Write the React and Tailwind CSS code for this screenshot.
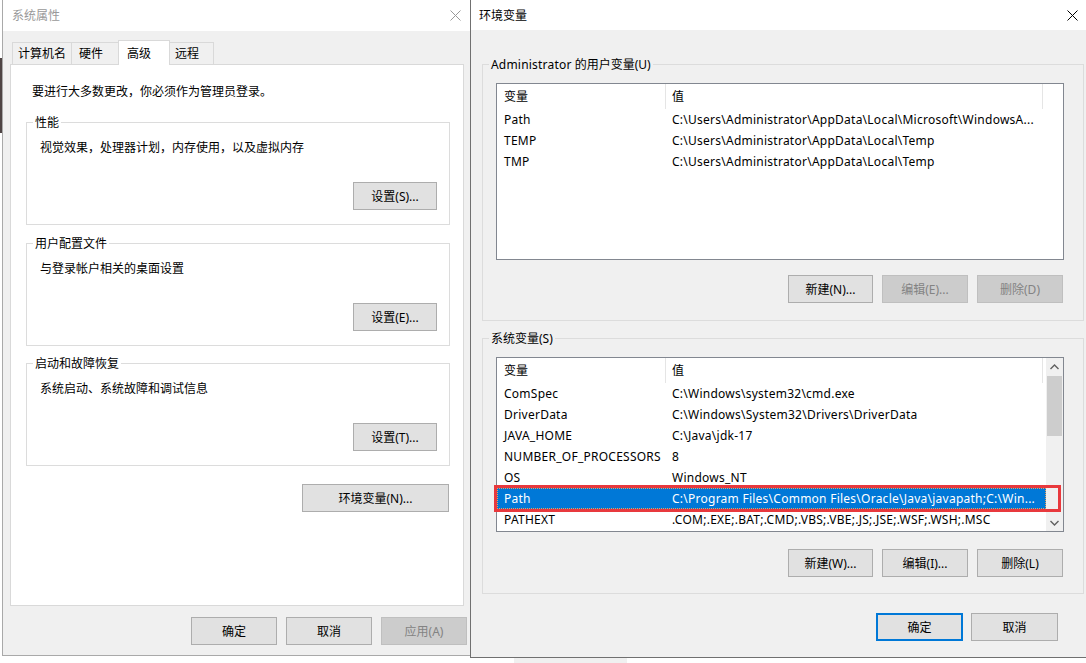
import React from 'react';
import clsx from 'clsx';

const userVars = [
  ['Path', 'C:\\Users\\Administrator\\AppData\\Local\\Microsoft\\WindowsA...'],
  ['TEMP', 'C:\\Users\\Administrator\\AppData\\Local\\Temp'],
  ['TMP', 'C:\\Users\\Administrator\\AppData\\Local\\Temp'],
];

const sysVars = [
  ['ComSpec', 'C:\\Windows\\system32\\cmd.exe'],
  ['DriverData', 'C:\\Windows\\System32\\Drivers\\DriverData'],
  ['JAVA_HOME', 'C:\\Java\\jdk-17'],
  ['NUMBER_OF_PROCESSORS', '8'],
  ['OS', 'Windows_NT'],
  ['Path', 'C:\\Program Files\\Common Files\\Oracle\\Java\\javapath;C:\\Win...'],
  ['PATHEXT', '.COM;.EXE;.BAT;.CMD;.VBS;.VBE;.JS;.JSE;.WSF;.WSH;.MSC'],
];

const CloseX = ({ color }) => (
  <svg width="11" height="11" viewBox="0 0 11 11">
    <path d="M0.5 0.5L10.5 10.5M10.5 0.5L0.5 10.5" stroke={color} strokeWidth="1" />
  </svg>
);

const Btn = ({ children, w = 'w-[86px]', disabled, primary }) => (
  <div
    className={clsx(
      'h-[28px] flex items-center justify-center shrink-0',
      w,
      disabled && 'bg-[#cccccc] border border-[#bfbfbf] text-[#838383]',
      !disabled && 'bg-[#e1e1e1] text-black',
      !disabled && !primary && 'border border-[#adadad]',
      primary && 'border-2 border-[#0078d7]'
    )}
  >
    {children}
  </div>
);

const Group = ({ label, labelBg, className, children }) => (
  <div className={clsx('relative border border-[#dcdcdc] flex flex-col shrink-0', className)}>
    <span className={clsx('absolute -top-[9px] left-[6px] px-[2px] leading-[17px]', labelBg)}>{label}</span>
    {children}
  </div>
);

const Tab = ({ children, w, pl, active }) => (
  <div
    className={clsx(
      'border border-b-0 border-[#d9d9d9] -ml-px flex items-center',
      w,
      pl,
      active ? 'h-[25px] bg-white relative z-10 -mb-px' : 'h-[22px] bg-[#f0f0f0]'
    )}
  >
    {children}
  </div>
);

const Row = ({ name, value, selected }) => (
  <div
    className={clsx(
      'flex h-[21px] items-center whitespace-nowrap tracking-[0.25px]',
      selected ? 'bg-[#0078d7] text-white outline-1 outline-dotted outline-[#e8a060] -outline-offset-1' : 'text-black'
    )}
  >
    <div className="w-[169px] pl-[7px] shrink-0">{name}</div>
    <div className="pl-[6px] overflow-hidden">{value}</div>
  </div>
);

const Header = () => (
  <div className="flex h-[25px] items-center shrink-0">
    <div className="w-[169px] h-full pl-[7px] flex items-center border-r border-[#e5e5e5] shrink-0">变量</div>
    <div className="w-[377px] h-full pl-[6px] flex items-center border-r border-[#e5e5e5] shrink-0">值</div>
  </div>
);

const Chevron = ({ up }) => (
  <svg width="9" height="6" viewBox="0 0 9 6">
    <path d={up ? 'M0.5 5L4.5 1L8.5 5' : 'M0.5 1L4.5 5L8.5 1'} stroke="#606060" strokeWidth="1.4" fill="none" />
  </svg>
);

function SystemProps() {
  return (
    <div className="absolute left-[2px] top-0 w-[469px] h-[656px] border-l border-b border-[#a9a9a9] bg-[#f0f0f0] flex flex-col">
      <div className="h-[31px] bg-white flex items-center pl-[9px] pr-[8px] shrink-0">
        <span className="text-[#999999]">系统属性</span>
        <span className="ml-auto mr-[2px] flex"><CloseX color="#999999" /></span>
      </div>
      <div className="flex items-end pl-[10px] mt-[9px]">
        <Tab w="w-[60px]" pl="pl-[5px]">计算机名</Tab>
        <Tab w="w-[48px]" pl="pl-[7px]">硬件</Tab>
        <Tab w="w-[52px]" pl="pl-[8px]" active>高级</Tab>
        <Tab w="w-[45px]" pl="pl-[5px]">远程</Tab>
      </div>
      <div className="ml-[7px] w-[454px] h-[542px] bg-white border border-[#d9d9d9] flex flex-col shrink-0">
        <div className="pt-[18px] pl-[21px]">要进行大多数更改，你必须作为管理员登录。</div>
        <Group label="性能" labelBg="bg-white" className="ml-[15px] mt-[22px] w-[424px] h-[103px] pt-[16px] px-[12px] pb-[14px]">
          <div className="pl-[1px]">视觉效果，处理器计划，内存使用，以及虚拟内存</div>
          <div className="mt-auto self-end"><Btn w="w-[84px]">设置(S)...</Btn></div>
        </Group>
        <Group label="用户配置文件" labelBg="bg-white" className="ml-[15px] mt-[18px] w-[424px] h-[103px] pt-[16px] px-[12px] pb-[14px]">
          <div className="pl-[1px]">与登录帐户相关的桌面设置</div>
          <div className="mt-auto self-end"><Btn w="w-[84px]">设置(E)...</Btn></div>
        </Group>
        <Group label="启动和故障恢复" labelBg="bg-white" className="ml-[15px] mt-[17px] w-[424px] h-[103px] pt-[16px] px-[12px] pb-[14px]">
          <div className="pl-[1px]">系统启动、系统故障和调试信息</div>
          <div className="mt-auto self-end"><Btn w="w-[84px]">设置(T)...</Btn></div>
        </Group>
        <div className="mt-[18px] self-end mr-[14px]"><Btn w="w-[147px]">环境变量(N)...</Btn></div>
      </div>
      <div className="flex mt-[11px] pl-[188px] gap-[9px]">
        <Btn>确定</Btn>
        <Btn>取消</Btn>
        <Btn disabled>应用(A)</Btn>
      </div>
    </div>
  );
}

function EnvVars() {
  return (
    <div className="absolute left-[470px] top-0 w-[626px] h-[658px] border-l border-b border-[#707070] bg-[#f0f0f0] flex flex-col">
      <div className="h-[30px] bg-white flex items-center pl-[8px] shrink-0">
        <span>环境变量</span>
        <span className="ml-auto mr-[18px] flex"><CloseX color="#000000" /></span>
      </div>
      <div className="flex flex-col px-[11px]">
        <Group label={<span>
          <span className="tracking-[0.2px]">Administrator</span> 的用户变量(U)</span>} labelBg="bg-[#f0f0f0]" className="mt-[34px] w-[602px] h-[257px]">
          <div className="ml-[13px] mt-[18px] w-[568px] h-[177px] border border-[#828790] bg-white flex flex-col shrink-0">
            <Header />
            {userVars.map(([n, v]) => (
              <Row key={n} name={n} value={v} />
            ))}
          </div>
          <div className="flex justify-end gap-[9px] mt-[15px] pr-[20px]">
            <Btn w="w-[85px]">新建(N)...</Btn>
            <Btn disabled>编辑(E)...</Btn>
            <Btn disabled>删除(D)</Btn>
          </div>
        </Group>
        <Group label="系统变量(S)" labelBg="bg-[#f0f0f0]" className="mt-[17px] w-[602px] h-[256px]">
          <div className="ml-[13px] mt-[18px] w-[568px] h-[175px] border border-[#828790] bg-white flex shrink-0 overflow-hidden">
            <div className="flex-1 flex flex-col overflow-hidden">
              <Header />
              {sysVars.map(([n, v]) => (
                <Row key={n} name={n} value={v} selected={n === 'Path'} />
              ))}
            </div>
            <div className="w-[17px] bg-[#f0f0f0] flex flex-col shrink-0">
              <div className="h-[17px] flex items-center justify-center"><Chevron up /></div>
              <div className="h-[60px] mt-px mx-[1px] bg-[#cdcdcd]" />
              <div className="mt-auto h-[17px] flex items-center justify-center"><Chevron /></div>
            </div>
          </div>
          <div className="flex justify-end gap-[9px] mt-[17px] pr-[20px]">
            <Btn w="w-[85px]">新建(W)...</Btn>
            <Btn>编辑(I)...</Btn>
            <Btn>删除(L)</Btn>
          </div>
        </Group>
        <div className="flex justify-end gap-[8px] mt-[19px] pr-[27px]">
          <Btn w="w-[87px]" primary>确定</Btn>
          <Btn w="w-[87px]">取消</Btn>
        </div>
      </div>
    </div>
  );
}

export default function App() {
  return (
    <div className="relative w-[1086px] h-[663px] bg-white overflow-hidden text-[12px] leading-[17px] text-black font-['Noto_Sans','Noto_Sans_CJK_SC',sans-serif]">
      <div className="absolute left-0 top-[58px] w-[2px] h-[75px] bg-[#4e4444]" />
      <div className="absolute left-[514px] top-[657px] w-[113px] h-[6px] bg-[#f0f0f0]" />
      <SystemProps />
      <EnvVars />
      <div className="absolute left-[494px] top-[485px] w-[567px] h-[27px] border-[3px] border-[#e8393d] pointer-events-none" />
    </div>
  );
}
